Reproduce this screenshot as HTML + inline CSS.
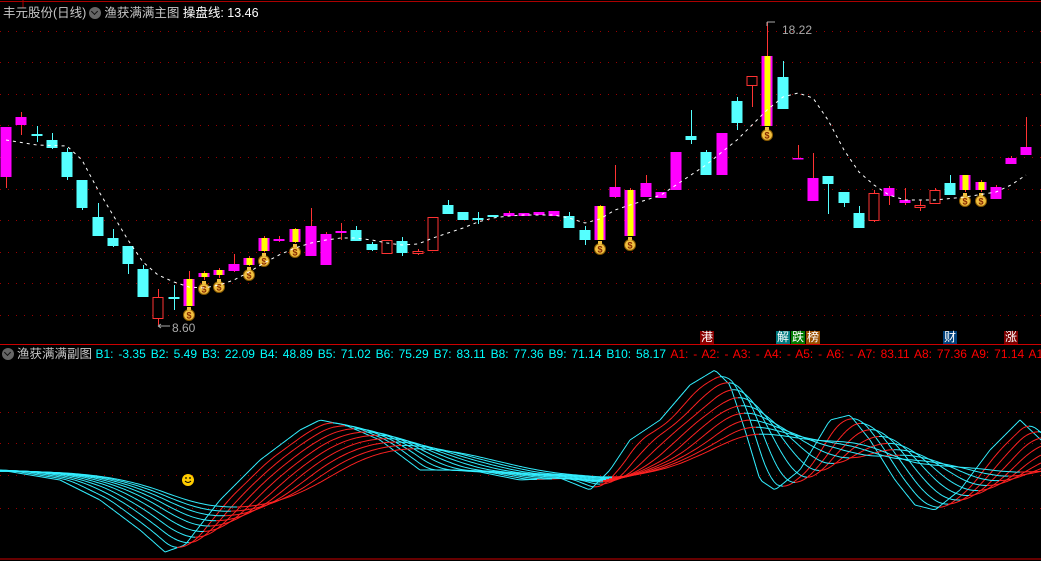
<!DOCTYPE html>
<html><head><meta charset="utf-8"><style>
html,body{margin:0;padding:0;background:#000;width:1041px;height:561px;overflow:hidden}
body{font-family:"Liberation Sans","Noto Sans CJK SC",sans-serif;position:relative}
.t{position:absolute;white-space:nowrap;font-size:12.5px;line-height:14px}
.tag{position:absolute;top:331px;width:14px;height:13px;font-size:12px;line-height:13px;color:#fff;text-align:center}
.ic{display:inline-block;width:12px;height:12px;border-radius:6px;background:#666;vertical-align:-2px;margin:0 3px;position:relative}
.ic:after{content:"";position:absolute;left:3px;top:2px;width:4px;height:4px;border-right:1.5px solid #111;border-bottom:1.5px solid #111;transform:rotate(45deg)}
.v{font-size:12px;word-spacing:1.6px}
</style></head><body>
<svg id="s" width="1041" height="561" style="position:absolute;left:0;top:0"></svg>
<div class="t" style="left:3px;top:6px;color:#c8c8c8">丰元股份(日线)<span class="ic"></span>渔获满满主图 <span style="color:#fff">操盘线: 13.46</span></div>
<div class="t" style="left:2px;top:347px;color:#c8c8c8"><span class="ic" style="margin-left:0"></span>渔获满满副图 <span class="v" style="color:#0ff">B1: -3.35 B2: 5.49 B3: 22.09 B4: 48.89 B5: 71.02 B6: 75.29 B7: 83.11 B8: 77.36 B9: 71.14 B10: 58.17 </span><span class="v" style="color:#f00">A1: - A2: - A3: - A4: - A5: - A6: - A7: 83.11 A8: 77.36 A9: 71.14 A10: 58.17</span></div>
<div class="tag" style="left:700px;background:#8a0000">港</div>
<div class="tag" style="left:776px;background:#007a80">解</div>
<div class="tag" style="left:791px;background:#007a00">跌</div>
<div class="tag" style="left:806px;background:#9a5000">榜</div>
<div class="tag" style="left:943px;background:#00407a">财</div>
<div class="tag" style="left:1004px;background:#7a0000">涨</div>
<div class="t" style="left:782px;top:23px;color:#aaa;font-size:12px">18.22</div>
<div class="t" style="left:172px;top:321px;color:#aaa;font-size:12px">8.60</div>
<script>
var s=document.getElementById('s'),h='';
h+='<line x1="0" y1="1.5" x2="1041" y2="1.5" stroke="#a00" stroke-width="1"/><line x1="23" y1="0" x2="23" y2="8" stroke="#a00"/>';
[31.5,62.5,94.5,125.5,157.5,189.5,220.5,252.5,283.5,315.5,412.5,443.5,475.5,508.5].forEach(function(y){h+='<line x1="0" y1="'+y+'" x2="1041" y2="'+y+'" stroke="#900" stroke-dasharray="1 7"/>';});
h+='<line x1="0" y1="344.5" x2="1041" y2="344.5" stroke="#c00"/><line x1="0" y1="559" x2="1041" y2="559" stroke="#c00"/>';
var C=[[6,127,177,127,188,'m'],[21,117,125,112,135,'m'],[37,134,136,126,142,'c'],[52,140,148,133,149,'c'],[67,152,177,148,180,'c'],[82,180,208,180,210,'c'],[98,217,236,203,236,'c'],[113,238,246,229,247,'c'],[128,246,264,246,274,'c'],[143,269,297,265,297,'c'],[158,297,318,289,325,'r'],[174,297,299,285,310,'c'],[189,279,306,271,306,'s',1],[204,273,277,271,280,'s',1],[219,270,275,268,278,'s',1],[234,264,271,254,272,'m'],[249,258,265,256,266,'s',1],[264,238,251,236,252,'s',1],[279,239,241,236,242,'m'],[295,229,242,228,243,'s',1],[311,226,256,208,256,'m'],[326,234,265,232,265,'m'],[341,231,233,223,240,'m'],[356,230,241,226,241,'c'],[372,244,250,242,251,'c'],[387,240,253,240,253,'r'],[402,241,253,237,256,'c'],[418,251,253,249,255,'r'],[433,217,250,217,250,'r'],[448,205,214,200,214,'c'],[463,212,220,212,220,'c'],[478,218,220,212,224,'c'],[493,215,217,215,217,'c'],[509,213,216,211,216,'m'],[524,213,216,213,216,'m'],[539,212,215,212,215,'m'],[554,211,216,211,216,'m'],[569,216,228,212,228,'c'],[585,230,240,226,245,'c'],[600,206,240,205,240,'s',1],[615,187,197,165,198,'m'],[630,190,236,188,236,'s',1],[646,183,197,175,197,'m'],[661,192,198,192,198,'m'],[676,152,190,152,190,'m'],[691,136,140,110,144,'c'],[706,152,175,150,175,'c'],[722,133,175,133,175,'m'],[737,101,123,97,130,'c'],[752,76,85,76,107,'r'],[767,56,126,22,126,'s',1],[783,77,109,61,109,'c'],[798,158,159,145,159,'m'],[813,178,201,153,201,'m'],[828,176,184,176,214,'c'],[844,192,203,192,207,'c'],[859,213,228,206,228,'c'],[874,193,220,190,222,'r'],[889,188,196,186,205,'m'],[905,200,203,188,205,'m'],[920,205,207,200,211,'r'],[935,190,203,188,203,'r'],[950,183,195,175,195,'c'],[965,175,190,175,192,'s',1],[981,182,190,180,192,'s',1],[996,187,199,185,199,'m'],[1011,158,164,156,164,'m'],[1026,147,155,117,155,'m']];
function bag(x,y){return '<circle cx="'+x+'" cy="'+y+'" r="5.5" fill="#f0c040" stroke="#8a5a00"/><rect x="'+(x-2)+'" y="'+(y-8)+'" width="4" height="3" fill="#f0c040"/><text x="'+x+'" y="'+(y+3.5)+'" font-size="9" font-weight="bold" fill="#8a2a00" text-anchor="middle" font-family="Liberation Sans">$</text>';}
C.forEach(function(c){var x=c[0],w=11,l=x-5.5,t=c[5];
 var col=t=='c'?'#5ff':t=='r'?'#f33':'#f0f';
 var wc=t=='c'?'#5ff':'#f33';
 h+='<line x1="'+(x+.5)+'" y1="'+c[3]+'" x2="'+(x+.5)+'" y2="'+c[4]+'" stroke="'+wc+'"/>';
 var hh=Math.max(c[2]-c[1],1.5);
 if(t=='r')h+='<rect x="'+(l+.5)+'" y="'+(c[1]+.5)+'" width="'+(w-1)+'" height="'+hh+'" fill="#000" stroke="#f33"/>';
 else if(t=='s'){h+='<rect x="'+l+'" y="'+c[1]+'" width="'+w+'" height="'+hh+'" fill="#f0f"/><rect x="'+(x-2.5)+'" y="'+c[1]+'" width="6" height="'+hh+'" fill="#ff0"/>';}
 else h+='<rect x="'+l+'" y="'+c[1]+'" width="'+w+'" height="'+hh+'" fill="'+col+'"/>';
 if(c[6])h+=bag(x,c[4]+9);
});
var M=[[6,140],[37,145],[67,146],[82,160],[98,190],[113,215],[128,240],[143,262],[158,275],[174,282],[189,287],[204,288],[219,285],[234,280],[249,272],[264,263],[279,255],[295,248],[311,243],[326,240],[341,238],[356,238],[372,240],[387,243],[402,245],[418,244],[433,238],[448,233],[463,228],[478,222],[493,218],[509,216],[524,215],[554,215],[569,218],[585,223],[600,219],[615,210],[630,205],[646,200],[661,195],[676,185],[691,175],[706,165],[722,152],[737,140],[752,125],[767,110],[783,97],[798,93],[813,98],[828,120],[844,150],[859,172],[874,185],[889,195],[905,200],[935,200],[965,197],[996,192],[1011,185],[1026,175]];
h+='<polyline points="'+M.map(function(p){return p.join(',')}).join(' ')+'" fill="none" stroke="#fff" stroke-dasharray="3 4"/>';
h+='<path d="M767 22 h8 M767 22 v4 M158 326 h12 M158 326 l3 -2 M158 326 l3 2" stroke="#aaa" fill="none"/>';
var K=[[0,470],[60,480],[100,500],[140,530],[165,552],[185,545],[220,500],[260,460],[300,430],[320,420],[345,425],[380,440],[420,470],[450,470],[480,472],[520,480],[560,478],[590,490],[610,470],[630,440],[660,420],[690,385],[715,370],[730,385],[745,430],[760,480],[775,490],[800,470],[830,420],[850,415],[870,440],[895,480],[915,505],[935,510],[960,490],[990,450],[1020,420],[1041,440]];
var f=[];for(var x=-300;x<=1041;x++){var xx=Math.max(0,x),i=0;while(i<K.length-2&&K[i+1][0]<xx)i++;var a=K[i],b=K[i+1],u=(xx-a[0])/(b[0]-a[0]);f.push(a[1]+(b[1]-a[1])*u);}
for(var k=0;k<10;k++){var W=1+k*18,L=[];for(var x=0;x<=1041;x+=3){var sm=0;for(var j=0;j<W;j++)sm+=f[x+300-j];var v=sm/W;v=475+(v-475)*(1-k*0.03);L.push([x,v]);}
 for(var i=1;i<L.length;i++){var up=L[i][1]<L[i-1][1]-0.05;h+='<line x1="'+L[i-1][0]+'" y1="'+L[i-1][1].toFixed(1)+'" x2="'+L[i][0]+'" y2="'+L[i][1].toFixed(1)+'" stroke="'+(up&&k>0?'#f22':'#3ef')+'" stroke-width="1"/>';}}
h+='<circle cx="188" cy="480" r="6" fill="#fc0"/><circle cx="186" cy="478" r="0.9" fill="#000"/><circle cx="190" cy="478" r="0.9" fill="#000"/><path d="M185 481 q3 3 6 0" stroke="#000" fill="none"/>';
s.innerHTML=h;
</script>
</body></html>
